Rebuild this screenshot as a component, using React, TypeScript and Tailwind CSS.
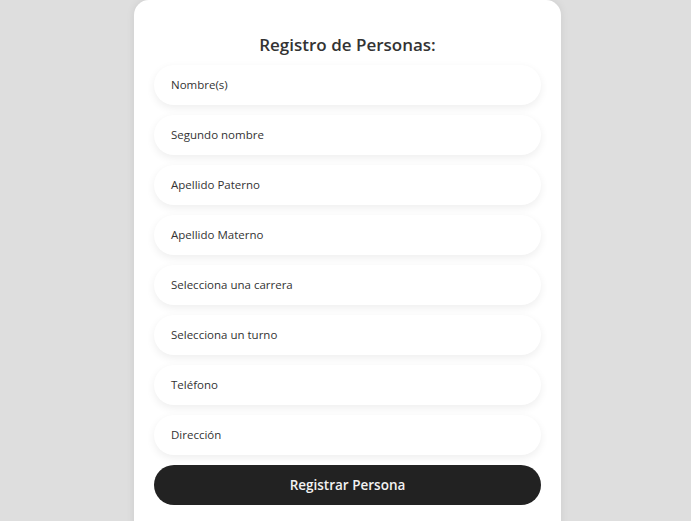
const campos = [
  "Nombre(s)",
  "Segundo nombre",
  "Apellido Paterno",
  "Apellido Materno",
  "Selecciona una carrera",
  "Selecciona un turno",
  "Teléfono",
  "Dirección",
];

export default function App() {
  return (
    <div className="min-h-screen bg-[#dedede] flex justify-center pl-1 overflow-hidden font-['Open_Sans',sans-serif]">
      <div className="w-[427px] bg-white rounded-t-[15px] shadow-[0_0_8px_rgba(0,0,0,0.08)] px-5 pt-[31px] pb-6 h-[540px]">
        <h2 className="text-center text-[17px] leading-[28px] font-semibold text-[#333] mb-[6px]">
          Registro de Personas:
        </h2>
        <form className="flex flex-col gap-[10px]">
          {campos.map((c) => (
            <div
              key={c}
              className="h-10 rounded-full bg-white shadow-[0_3px_8px_rgba(0,0,0,0.07)] flex items-center pl-[17px] text-[11.5px] text-[#333]"
            >
              {c}
            </div>
          ))}
          <button
            type="button"
            className="h-10 rounded-full bg-[#222222] text-[#f2f2f2] text-[13.5px] font-semibold"
          >
            Registrar Persona
          </button>
        </form>
      </div>
    </div>
  );
}
